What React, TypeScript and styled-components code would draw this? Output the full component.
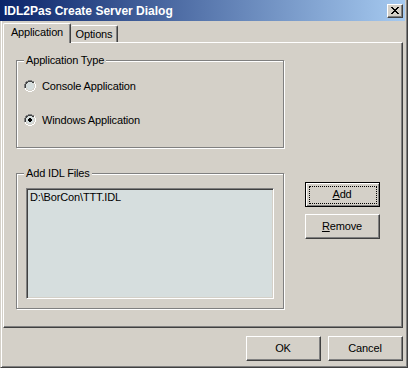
import React from 'react';
import styled, { createGlobalStyle } from 'styled-components';

const Global = createGlobalStyle`
  html, body { margin: 0; padding: 0; background: #D4D0C8; }
  body {
    font-family: "Liberation Sans", Arial, sans-serif;
    font-size: 11px;
    letter-spacing: -0.15px;
    color: #000;
  }
  * { box-sizing: border-box; }
`;

const FACE = '#D4D0C8';
const WINDOW_BG = '#D6DEDE';

const Window = styled.div`
  width: 408px;
  height: 368px;
  background: ${FACE};
  border-left: 1px solid ${FACE};
  border-right: 1px solid #404040;
  border-bottom: 1px solid #404040;
  box-shadow: inset 1px 0 0 #fff, inset -1px -1px 0 #808080;
  display: flex;
  flex-direction: column;
`;

const TitleBar = styled.div`
  height: 21px;
  margin: 0 2px 0 -1px;
  padding: 0 2px 0 4px;
  background: linear-gradient(to right, #0a246a, #a6caf0);
  display: flex;
  align-items: center;
  justify-content: space-between;
`;

const Title = styled.span`
  color: #fff;
  font-weight: bold;
  font-size: 12px;
  letter-spacing: 0;
  line-height: 14px;
  white-space: nowrap;
`;

const CaptionButton = styled.div`
  width: 16px;
  height: 14px;
  background: ${FACE};
  border: 1px solid;
  border-color: #fff #404040 #404040 #fff;
  box-shadow: inset -1px -1px 0 #808080;
  display: flex;
  align-items: center;
  justify-content: center;
  padding: 0 1px 1px 0;
`;

const TabStrip = styled.div`
  margin: 2px 0 0 2px;
  height: 19px;
  display: flex;
  align-items: flex-end;
`;

const Tab = styled.div<{ $active?: boolean }>`
  position: relative;
  height: ${p => (p.$active ? 20 : 17)}px;
  margin-bottom: ${p => (p.$active ? -1 : 0)}px;
  width: ${p => (p.$active ? 68 : 47)}px;
  z-index: ${p => (p.$active ? 2 : 1)};
  background: ${FACE};
  border-top: 1px solid #fff;
  border-left: ${p => (p.$active ? '1px solid #fff' : 'none')};
  border-right: 1px solid #404040;
  box-shadow: inset -1px 0 0 #808080;
  border-top-left-radius: 2px;
  border-top-right-radius: 2px;
  display: flex;
  align-items: center;
  justify-content: center;
  padding-bottom: ${p => (p.$active ? 2 : 0)}px;
  line-height: 13px;
`;

const Panel = styled.div`
  margin-left: 2px;
  width: 400px;
  height: 286px;
  border-top: 1px solid #fff;
  border-left: 1px solid #fff;
  border-right: 1px solid #404040;
  border-bottom: 1px solid #404040;
  box-shadow: inset -1px -1px 0 #808080;
  padding: 17px 0 0 12px;
  display: flex;
  flex-direction: column;
`;

const GroupBox = styled.div<{ $h: number }>`
  position: relative;
  width: 268px;
  height: ${p => p.$h}px;
  border: 1px solid #808080;
  box-shadow: inset 1px 1px 0 #fff, 1px 1px 0 #fff;
`;

const GroupLabel = styled.span`
  position: absolute;
  left: 7px;
  top: -7px;
  padding: 0 2px;
  background: ${FACE};
  line-height: 13px;
`;

const RadioList = styled.div`
  padding: 17px 0 0 7px;
  display: flex;
  flex-direction: column;
  gap: 18px;
`;

const RadioRow = styled.label`
  height: 16px;
  display: flex;
  align-items: center;
  gap: 6px;
  line-height: 13px;
`;

const LowerRow = styled.div`
  margin-top: 25px;
  display: flex;
  align-items: flex-start;
`;

const ListGroupInner = styled.div`
  padding: 14px 0 0 9px;
`;

const ListBox = styled.div`
  width: 248px;
  height: 111px;
  background: ${WINDOW_BG};
  border: 1px solid;
  border-color: #808080 #fff #fff #808080;
  box-shadow: inset 1px 1px 0 #404040, inset -1px -1px 0 ${FACE};
  padding: 2px 3px;
  line-height: 13px;
`;

const SideButtons = styled.div`
  margin: 9px 0 0 21px;
  display: flex;
  flex-direction: column;
  gap: 7px;
`;

const Button = styled.div<{ $default?: boolean }>`
  position: relative;
  width: 75px;
  height: 25px;
  background: ${FACE};
  display: flex;
  align-items: center;
  justify-content: center;
  line-height: 13px;
  padding: 0 1px 1px 0;
  ${p =>
    p.$default
      ? `
    border: 1px solid #000;
    box-shadow: inset 1px 1px 0 #fff, inset -1px -1px 0 #808080;
    &::after {
      content: '';
      position: absolute;
      left: 3px; top: 3px; right: 2px; bottom: 2px;
      border: 1px dotted #000;
    }
  `
      : `
    border: 1px solid;
    border-color: #fff #404040 #404040 #fff;
    box-shadow: inset -1px -1px 0 #808080;
  `}
`;

const BottomBar = styled.div`
  margin-top: 8px;
  padding-right: 4px;
  display: flex;
  justify-content: flex-end;
  gap: 7px;
`;

const CloseGlyph = () => (
  <svg width="8" height="7" viewBox="0 0 8 7" shapeRendering="crispEdges">
    <path
      d="M0 0h2v1H0zM6 0h2v1H6zM1 1h2v1H1zM5 1h2v1H5zM2 2h4v1H2zM3 3h2v1H3zM2 4h4v1H2zM1 5h2v1H1zM5 5h2v1H5zM0 6h2v1H0zM6 6h2v1H6z"
      fill="#000"
    />
  </svg>
);

const Radio = ({ checked }: { checked?: boolean }) => (
  <svg width="12" height="12" viewBox="0 0 12 12" shapeRendering="crispEdges">
    <path d="M4 0h4v1H4zM2 1h2v1H2zM8 1h2v1H8zM1 2h1v2H1zM0 4h1v4H0z" fill="#808080" />
    <path d="M4 1h4v1H4zM2 2h2v1H2zM8 2h2v1H8zM2 3h1v1H2zM1 4h1v4H1z" fill="#404040" />
    <path d="M10 2h1v2h-1zM11 4h1v4h-1zM10 8h1v2h-1zM8 10h2v1H8zM2 10h2v1H2zM4 11h4v1H4zM1 8h1v2H1z" fill="#fff" />
    <path d="M9 3h1v1H9zM10 4h1v4h-1zM9 8h1v1H9zM8 9h1v1H8zM3 9h1v1H3zM4 10h4v1H4zM2 8h1v1H2z" fill="#D4D0C8" />
    <path d="M4 2h4v1H4zM3 3h6v1H3zM2 4h8v4H2zM3 8h6v1H3zM4 9h4v1H4z" fill={WINDOW_BG} />
    {checked && <path d="M5 4h2v1H5zM4 5h4v2H4zM5 7h2v1H5z" fill="#000" />}
  </svg>
);

export default function App() {
  return (
    <>
      <Global />
      <Window>
        <TitleBar>
          <Title>IDL2Pas Create Server Dialog</Title>
          <CaptionButton>
            <CloseGlyph />
          </CaptionButton>
        </TitleBar>
        <TabStrip>
          <Tab $active>Application</Tab>
          <Tab>Options</Tab>
        </TabStrip>
        <Panel>
          <GroupBox $h={88}>
            <GroupLabel>Application Type</GroupLabel>
            <RadioList>
              <RadioRow>
                <Radio />
                Console Application
              </RadioRow>
              <RadioRow>
                <Radio checked />
                Windows Application
              </RadioRow>
            </RadioList>
          </GroupBox>
          <LowerRow>
            <GroupBox $h={136}>
              <GroupLabel>Add IDL Files</GroupLabel>
              <ListGroupInner>
                <ListBox>D:\BorCon\TTT.IDL</ListBox>
              </ListGroupInner>
            </GroupBox>
            <SideButtons>
              <Button $default>
                <span>
                  <u>A</u>dd
                </span>
              </Button>
              <Button>
                <span>
                  <u>R</u>emove
                </span>
              </Button>
            </SideButtons>
          </LowerRow>
        </Panel>
        <BottomBar>
          <Button>OK</Button>
          <Button>Cancel</Button>
        </BottomBar>
      </Window>
    </>
  );
}
